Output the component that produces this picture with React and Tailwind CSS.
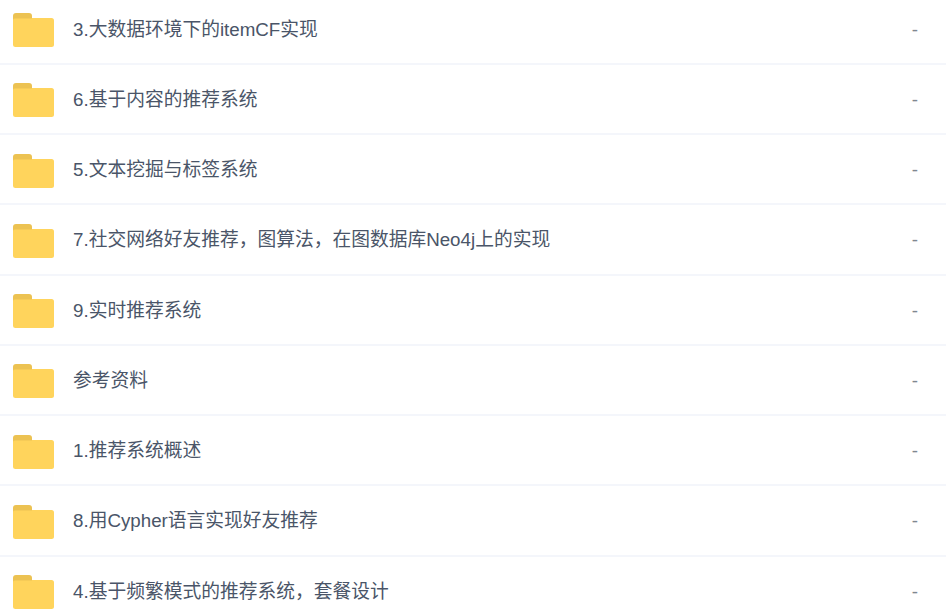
const folders = [
  "3.大数据环境下的itemCF实现",
  "6.基于内容的推荐系统",
  "5.文本挖掘与标签系统",
  "7.社交网络好友推荐，图算法，在图数据库Neo4j上的实现",
  "9.实时推荐系统",
  "参考资料",
  "1.推荐系统概述",
  "8.用Cypher语言实现好友推荐",
  "4.基于频繁模式的推荐系统，套餐设计",
];

function FolderIcon() {
  return (
    <svg width="41" height="34" viewBox="0 0 41 34" className="mt-[1px] shrink-0">
      <path d="M0 3a3 3 0 0 1 3-3h13a3 3 0 0 1 3 3v5H0z" fill="#ecc252" />
      <rect x="0" y="5" width="41" height="29" rx="2.5" fill="#ffd45c" />
      <path d="M0 5h19v0.5H0z" fill="#ecc252" />
    </svg>
  );
}

export default function App() {
  return (
    <main className="h-[615px] overflow-hidden bg-white font-['Liberation_Sans','Noto_Sans_CJK_SC',sans-serif]">
      <ul className="-mt-[5.5px]">
        {folders.map((name) => (
          <li key={name} className="flex h-[70.25px] items-center border-b-2 border-[#f4f6fb] pl-[13px] pr-[28px] pt-[2px]">
            <FolderIcon />
            <span className="ml-[19px] flex-1 text-[18.75px] text-[#4a5568]">{name}</span>
            <span className="text-[18.75px] text-[#7f8790]">-</span>
          </li>
        ))}
      </ul>
    </main>
  );
}
